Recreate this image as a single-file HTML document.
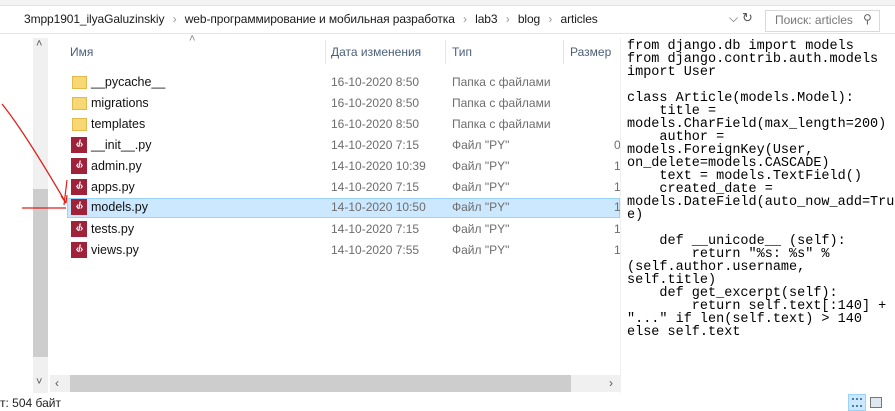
<!DOCTYPE html>
<html><head><meta charset="utf-8"><style>
body{margin:0;width:895px;height:411px;overflow:hidden;background:#fff;font-family:"Segoe UI","Liberation Sans","DejaVu Sans",sans-serif;position:relative}
.a{position:absolute}
.t{font-size:12px;white-space:nowrap}
.row{position:absolute;left:67px;width:553px;height:20px}
.row .n{position:absolute;left:24px;top:2px;font-size:12.5px;color:#111}
.row .d{position:absolute;left:264px;top:2px;font-size:12px;color:#6d6d6d}
.row .ty{position:absolute;left:385px;top:2px;font-size:12px;color:#6d6d6d}
.row .s{position:absolute;left:547px;top:2px;font-size:12px;color:#6d6d6d}
.fold{position:absolute;left:5px;top:3px;width:15px;height:13px;background:#f8d775;border:1px solid #e1b94c;box-sizing:border-box}
.py{position:absolute;left:4px;top:1px;width:16px;height:16px;background:#a0213a;color:#fff;font:bold 10px "Liberation Sans",sans-serif;text-align:center;line-height:16px;letter-spacing:-1px}
pre{margin:0;font-family:"Liberation Mono",monospace;font-size:13.5px;line-height:13px;color:#000}
</style></head><body>
<div class="a" style="left:0;top:0;width:895px;height:5px;background:#f3f3f3;border-bottom:1px solid #e3e3e3"></div>
<div class="a" style="left:0;top:33px;width:895px;height:1px;background:#e5e5e5"></div>
<div class="a t" style="left:24px;top:12px;font-size:12px;color:#1a1a1a;letter-spacing:-0.1px">3mpp1901_ilyaGaluzinskiy <span style="color:#999;margin:0 5px">›</span> web-программирование и мобильная разработка <span style="color:#999;margin:0 5px">›</span> lab3 <span style="color:#999;margin:0 5px">›</span> blog <span style="color:#999;margin:0 5px">›</span> articles</div>
<div class="a t" style="left:729px;top:11px;color:#555">⌵</div>
<div class="a t" style="left:742px;top:10px;color:#555;font-size:13px">↻</div>
<div class="a" style="left:765px;top:10px;width:115px;height:22px;border:1px solid #d9d9d9;box-sizing:border-box"></div>
<div class="a t" style="left:775px;top:13px;color:#777">Поиск: articles</div>
<div class="a t" style="left:863px;top:12px;color:#666">⚲</div>

<div class="a" style="left:33px;top:38px;width:15px;height:355px;background:#f0f0f0"></div>
<div class="a" style="left:33px;top:189px;width:15px;height:168px;background:#cdcdcd"></div>
<div class="a t" style="left:36px;top:38px;color:#555;font-size:11px">˄</div>
<div class="a t" style="left:36px;top:376px;color:#555;font-size:11px">˅</div>

<div class="a t" style="left:189px;top:33px;color:#888;font-size:11px">˄</div>
<div class="a t" style="left:70px;top:45px;color:#4c607a">Имя</div>
<div class="a" style="left:325px;top:40px;width:1px;height:24px;background:#e5e5e5"></div>
<div class="a t" style="left:331px;top:45px;color:#4c607a">Дата изменения</div>
<div class="a" style="left:445px;top:40px;width:1px;height:24px;background:#e5e5e5"></div>
<div class="a t" style="left:452px;top:45px;color:#4c607a">Тип</div>
<div class="a" style="left:563px;top:40px;width:1px;height:24px;background:#e5e5e5"></div>
<div class="a t" style="left:570px;top:45px;color:#4c607a">Размер</div>

<div class="row" style="top:73px"><div class="fold"></div><div class="n">__pycache__</div><div class="d">16-10-2020 8:50</div><div class="ty">Папка с файлами</div></div>
<div class="row" style="top:94px"><div class="fold"></div><div class="n">migrations</div><div class="d">16-10-2020 8:50</div><div class="ty">Папка с файлами</div></div>
<div class="row" style="top:115px"><div class="fold"></div><div class="n">templates</div><div class="d">16-10-2020 8:50</div><div class="ty">Папка с файлами</div></div>
<div class="row" style="top:136px"><div class="py">‹/›</div><div class="n">__init__.py</div><div class="d">14-10-2020 7:15</div><div class="ty">Файл "PY"</div><div class="s">0</div></div>
<div class="row" style="top:157px"><div class="py">‹/›</div><div class="n">admin.py</div><div class="d">14-10-2020 10:39</div><div class="ty">Файл "PY"</div><div class="s">1</div></div>
<div class="row" style="top:178px"><div class="py">‹/›</div><div class="n">apps.py</div><div class="d">14-10-2020 7:15</div><div class="ty">Файл "PY"</div><div class="s">1</div></div>
<div class="row" style="top:198px;background:#cce8ff;border:1px solid #99d1ff;box-sizing:border-box"><div class="py" style="left:3px;top:0">‹/›</div><div class="n" style="left:23px;top:1px">models.py</div><div class="d" style="left:263px;top:1px">14-10-2020 10:50</div><div class="ty" style="left:384px;top:1px">Файл "PY"</div><div class="s" style="left:546px;top:1px">1</div></div>
<div class="row" style="top:220px"><div class="py">‹/›</div><div class="n">tests.py</div><div class="d">14-10-2020 7:15</div><div class="ty">Файл "PY"</div><div class="s">1</div></div>
<div class="row" style="top:241px"><div class="py">‹/›</div><div class="n">views.py</div><div class="d">14-10-2020 7:55</div><div class="ty">Файл "PY"</div><div class="s">1</div></div>

<div class="a" style="left:50px;top:375px;width:570px;height:17px;background:#f0f0f0"></div>
<div class="a" style="left:70px;top:375px;width:501px;height:17px;background:#cdcdcd"></div>
<div class="a t" style="left:55px;top:376px;color:#555">‹</div>
<div class="a t" style="left:609px;top:376px;color:#555">›</div>
<div class="a" style="left:620px;top:38px;width:1px;height:355px;background:#f0f0f0"></div>

<pre class="a" style="left:627px;top:40px">from django.db import models
from django.contrib.auth.models
import User

class Article(models.Model):
    title =
models.CharField(max_length=200)
    author =
models.ForeignKey(User,
on_delete=models.CASCADE)
    text = models.TextField()
    created_date =
models.DateField(auto_now_add=Tru
e)

    def __unicode__ (self):
        return "%s: %s" %
(self.author.username,
self.title)
    def get_excerpt(self):
        return self.text[:140] +
"..." if len(self.text) > 140
else self.text</pre>

<div class="a t" style="left:0;top:396px;color:#222">т: 504 байт</div>
<div class="a" style="left:848px;top:394px;width:18px;height:17px;background:#cce8ff;border:1px solid #99d1ff;box-sizing:border-box"></div>
<div class="a" style="left:852px;top:398px;width:10px;height:9px;border-top:2px dotted #4a7eb0;border-bottom:2px dotted #4a7eb0;box-sizing:border-box"></div>
<div class="a" style="left:870px;top:397px;width:12px;height:11px;border:1px solid #777;background:#dde7f0;box-sizing:border-box"></div>

<svg class="a" style="left:0;top:0" width="895" height="411">
<path d="M2 104 C15 120,35 150,66 203" stroke="#e0201a" stroke-width="1.3" fill="none"/>
<path d="M66 203 L61 196 M66 203 L67 195" stroke="#e0201a" stroke-width="1.2" fill="none"/>
<path d="M22 208 L66 208" stroke="#e0201a" stroke-width="1.3" fill="none"/>
<path d="M67 180 L64 205" stroke="#e0201a" stroke-width="1.2" fill="none"/>
</svg>
</body></html>
